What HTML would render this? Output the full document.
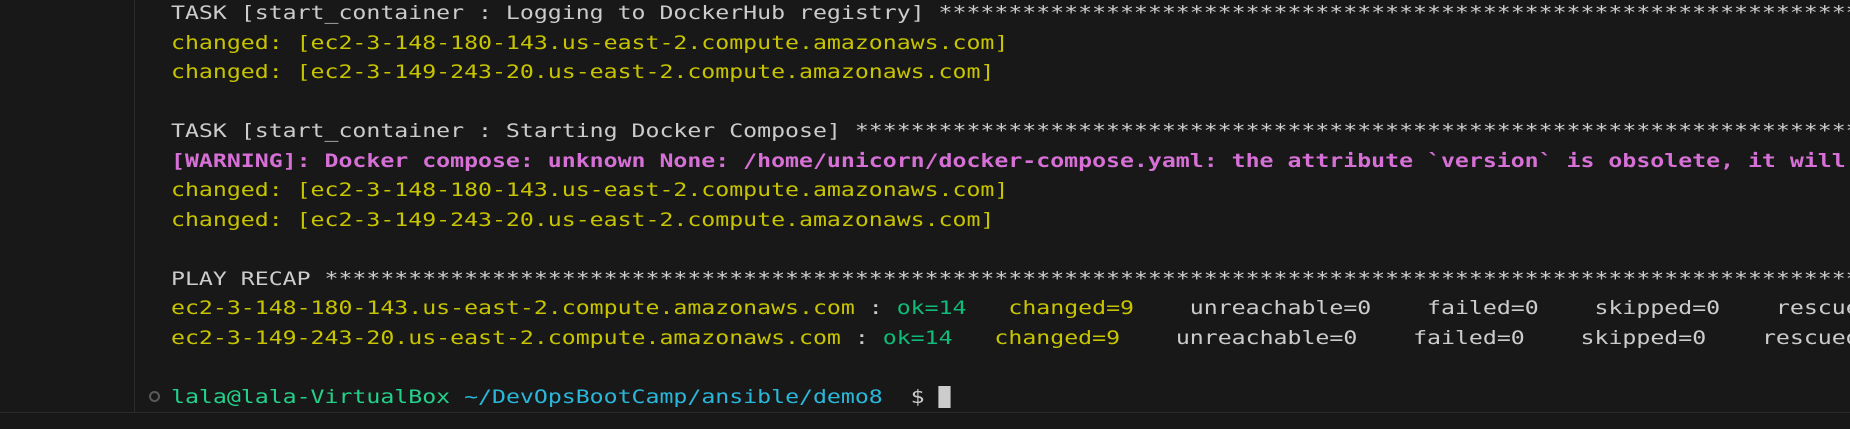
<!DOCTYPE html>
<html><head><meta charset="utf-8"><style>
html,body{margin:0;padding:0;background:#181818;width:1850px;height:429px;overflow:hidden}
.wrap{position:absolute;left:0;top:0;width:1850px;height:429px;overflow:hidden}
.side{position:absolute;left:0;top:0;width:134px;height:413px;border-right:1px solid #2b2b2b;background:#181818}
.bottom{position:absolute;left:0;top:412px;width:1850px;height:17px;border-top:1px solid #2b2b2b;background:#181818}
.term{position:absolute;left:171px;top:-1px;font-family:"DejaVu Sans Mono","Liberation Mono",monospace;font-size:19px;line-height:29.5px;color:#cccccc;white-space:pre;transform:scaleX(1.22);transform-origin:0 0}
.y{color:#c7c400}.m{color:#d670d6;font-weight:bold}.g{color:#10bc79}.pg{color:#23d18b}.c{color:#29b8db}
.circ{position:absolute;left:149px;top:391px;width:7px;height:7px;border:2px solid #5a5a5a;border-radius:50%}
.cur{display:inline-block;width:10px;height:22px;background:#cccccc;vertical-align:-5px}
</style></head><body>
<div class="wrap">
<div class="side"></div><div class="bottom"></div>
<div class="circ"></div>
<div class="term">TASK [start_container : Logging to DockerHub registry] ****************************************************************************************
<span class="y">changed: [ec2-3-148-180-143.us-east-2.compute.amazonaws.com]</span>
<span class="y">changed: [ec2-3-149-243-20.us-east-2.compute.amazonaws.com]</span>

TASK [start_container : Starting Docker Compose] **********************************************************************************************
<span class="m">[WARNING]: Docker compose: unknown None: /home/unicorn/docker-compose.yaml: the attribute `version` is obsolete, it will be ignored, please remove it</span>
<span class="y">changed: [ec2-3-148-180-143.us-east-2.compute.amazonaws.com]</span>
<span class="y">changed: [ec2-3-149-243-20.us-east-2.compute.amazonaws.com]</span>

PLAY RECAP ************************************************************************************************************************************
<span class="y">ec2-3-148-180-143.us-east-2.compute.amazonaws.com</span> : <span class="g">ok=14</span>   <span class="y">changed=9</span>    unreachable=0    failed=0    skipped=0    rescued=0    ignored=0
<span class="y">ec2-3-149-243-20.us-east-2.compute.amazonaws.com</span> : <span class="g">ok=14</span>   <span class="y">changed=9</span>    unreachable=0    failed=0    skipped=0    rescued=0    ignored=0

<span class="pg">lala@lala-VirtualBox</span> <span class="c">~/DevOpsBootCamp/ansible/demo8</span>  $ <span class="cur"></span></div>
</div>
</body></html>
